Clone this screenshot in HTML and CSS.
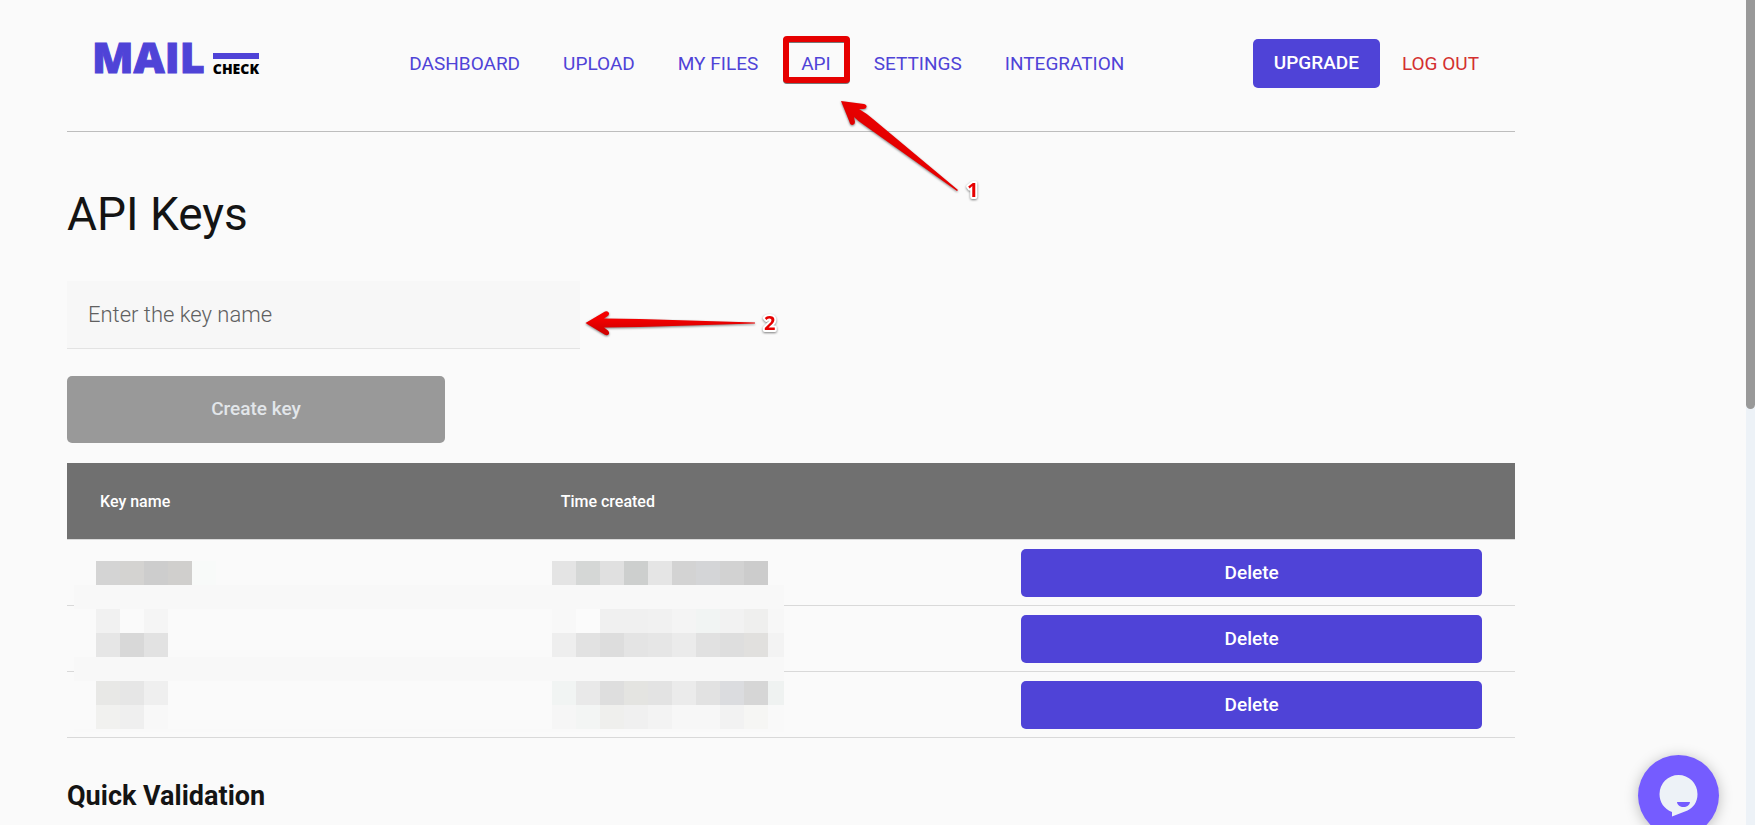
FILE: index.html
```html
<!DOCTYPE html>
<html lang="en">
<head>
<meta charset="utf-8">
<title>API Keys - Mail Check</title>
<meta name="viewport" content="width=device-width, initial-scale=1">
<link rel="stylesheet" href="styles.css">
</head>
<body>
<div class="page">
  <header class="header">
    <a class="logo" href="#" aria-label="Mail Check">
      <span class="logo-mail">MAIL</span>
      <span class="logo-side"><span class="logo-bar"></span><span class="logo-check">CHECK</span></span>
    </a>
    <nav class="nav">
      <a href="#">DASHBOARD</a>
      <a href="#">UPLOAD</a>
      <a href="#">MY FILES</a>
      <span class="marked">
        <a href="#">API</a>
        <svg class="note note-api" width="110" height="172" viewBox="780 32 110 172" aria-hidden="true">
          <defs>
            <linearGradient id="red" x1="1" y1="0" x2="0" y2="1"><stop offset="0.3" stop-color="#f40000"/><stop offset="0.7" stop-color="#d80000"/></linearGradient>
          </defs>
          <rect x="786" y="40" width="61" height="41" rx="1" fill="none" stroke="#777" stroke-width="6" stroke-linejoin="round"/>
          <rect x="786" y="39" width="61" height="41" rx="1" fill="none" stroke="#e60000" stroke-width="6" stroke-linejoin="round"/>
          <path class="shade" d="M841 101 L864 104 Q867 105 866.500 107 Q866 109.500 862 109 L859 109 Q866 113 873 119 L958 190 L957 191 L864 125 Q858 121 854 117 L855 122 Q855 124.500 852.500 125 Q850 125 849.500 122 Z" fill="url(#red)"/>
          <text class="note-num" x="967" y="197">1</text>
        </svg>
      </span>
      <a href="#">SETTINGS</a>
      <a href="#">INTEGRATION</a>
    </nav>
    <div class="account">
      <button class="btn upgrade" type="button">UPGRADE</button>
      <a class="logout" href="#">LOG OUT</a>
    </div>
  </header>

  <main>
    <h1>API Keys</h1>
    <form class="key-form">
      <div class="field">
        <input type="text" placeholder="Enter the key name" aria-label="Key name">
        <svg class="note note-input" width="200" height="40" viewBox="580 303 200 40" aria-hidden="true">
          <defs>
            <linearGradient id="red2" x1="0" y1="0" x2="0" y2="1"><stop offset="0.3" stop-color="#f40000"/><stop offset="0.8" stop-color="#d40000"/></linearGradient>
          </defs>
          <path class="shade" d="M585.500 323 L605 311.500 Q608 310.500 609 313 Q609.500 315 607 316.500 L604 318.500 L640 319 L755 322.500 V323.500 L640 327 L604 327.500 L608 330.500 Q610 333 608.500 334.500 Q607 336 604.500 334.500 Z" fill="url(#red2)"/>
          <text class="note-num" x="764" y="330">2</text>
        </svg>
      </div>
      <button class="btn create" type="button" disabled>Create key</button>
    </form>

    <div class="keys">
      <table>
        <thead>
          <tr><th scope="col">Key name</th><th scope="col">Time created</th><th></th></tr>
        </thead>
        <tbody>
          <tr><td></td><td></td><td><button class="btn delete" type="button">Delete</button></td></tr>
          <tr><td></td><td></td><td><button class="btn delete" type="button">Delete</button></td></tr>
          <tr><td></td><td></td><td><button class="btn delete" type="button">Delete</button></td></tr>
        </tbody>
      </table>
      <svg class="mosaic" width="710" height="171" viewBox="74 561 710 171" shape-rendering="crispEdges" aria-hidden="true">
        <path fill="#fafafa" d="M74 561h710v171H74z"/>
        <path fill="#f8f8f8" d="M74 585h710v24H74zM74 657h710v24H74z"/>
        <path fill="#f9f9f9" d="M74 729h710v3H74z"/>
        <g id="mosaic-cells"></g>
      </svg>
    </div>

    <h2>Quick Validation</h2>
  </main>
</div>

<button class="chat" type="button" aria-label="Open chat">
  <svg width="81" height="81" viewBox="0 0 81 81" aria-hidden="true">
    <path fill="#edf2f7" d="M40.500 20a19 19 0 0 1 19 19c0 8-4 13.500-10 16.500L34 61.500V57C26 54 21.500 47 21.500 39a19 19 0 0 1 19-19z"/>
    <path fill="#755cff" d="M39 47h13c-.5 3.500-3 5-6.500 5S39.500 50.500 39 47z"/>
  </svg>
</button>
<div class="scrollbar" aria-hidden="true"><div class="thumb"></div></div>
<script src="mosaic.js"></script>
</body>
</html>
```

FILE: styles.css
```css
* { box-sizing: border-box; }
body {
  margin: 0;
  min-height: 100vh;
  overflow: hidden;
  background: #fafafa;
  color: #141414;
  font-family: Roboto, "Liberation Sans", sans-serif;
  font-size: 19px;
}
a { color: #4f43d7; text-decoration: none; }
.page { max-width: 1515px; padding-left: 67px; }

.header {
  display: flex;
  justify-content: space-between;
  align-items: center;
  height: 132px;
  padding: 0 36px 4px 25px;
  border-bottom: 1px solid #bdbdbd;
}
.logo {
  display: flex;
  gap: 8px;
  padding: 0 22px 14px 0;
  font-family: "Open Sans", sans-serif;
  font-weight: 800;
}
.logo-mail { font-size: 43px; line-height: 44px; -webkit-text-stroke: 1px #4f43d7; }
.logo-side { display: flex; flex-direction: column; padding-top: 18px; }
.logo-bar { height: 6px; background: #4f43d7; }
.logo-check { margin-top: 1px; color: #000; font-size: 14px; line-height: 18px; }
.nav { display: flex; gap: 43px; line-height: 24px; }
.marked { position: relative; }
.account { display: flex; align-items: center; gap: 22px; }
.logout { color: #d32f2f; }

.btn {
  border: 0;
  border-radius: 5px;
  background: #4f43d7;
  color: #fff;
  font: 500 19px/24px Roboto, "Liberation Sans", sans-serif;
}
.upgrade { padding: 12px 21px 13px; }

.note { position: absolute; overflow: visible; pointer-events: none; }
.note-api { left: -21px; top: -20px; }
.note-input { left: 100%; top: 22px; }
.shade { filter: drop-shadow(0 1px 1px rgba(0, 0, 0, 0.5)); }
.note-num {
  fill: #e60000;
  stroke: #fff;
  stroke-width: 4px;
  stroke-linejoin: round;
  paint-order: stroke;
  font: 700 20px "Open Sans", sans-serif;
  filter: drop-shadow(0 1px 1px rgba(0, 0, 0, 0.5));
}

h1 { margin: 55px 0 39px; font-weight: 400; font-size: 46px; line-height: 55px; }
.key-form { margin-bottom: 20px; }
.field { position: relative; max-width: 513px; margin-bottom: 27px; }
.field input {
  display: block;
  width: 100%;
  height: 68px;
  padding: 0 21px;
  border: 0;
  border-bottom: 1px solid #e3e3e3;
  border-radius: 0;
  background: #f7f7f7;
  font: 300 22px Roboto, "Liberation Sans", sans-serif;
}
.field input::placeholder { color: #606060; opacity: 1; }
.create {
  display: block;
  width: 100%;
  max-width: 378px;
  height: 67px;
  padding: 0 0 2px;
  background: #999;
  color: #e2e6ea;
}

.keys { position: relative; }
table, thead, tbody { display: block; }
tr {
  display: grid;
  grid-template-columns: repeat(3, 1fr);
  align-items: center;
  padding: 9px 33px 8px;
  border-bottom: 1px solid #d9d9d9;
}
thead tr { height: 77px; background: #707070; }
th { padding: 0; text-align: left; color: #fff; font-weight: 500; font-size: 16px; }
td { padding: 0; }
.delete { display: block; width: 100%; height: 48px; }
.mosaic { position: absolute; left: 7px; top: 98px; }

h2 { margin: 41px 0 0; font-weight: 700; font-size: 27px; line-height: 34px; }

.chat {
  position: fixed;
  right: 36px;
  bottom: -11px;
  width: 81px;
  height: 81px;
  padding: 0;
  border: 0;
  border-radius: 50%;
  background: #755cff;
  box-shadow: 0 2px 14px rgba(0, 0, 0, 0.25);
}
.chat svg { display: block; }
.scrollbar { position: fixed; top: 0; right: 0; bottom: 0; width: 9px; background: #edf2f7; }
.thumb { height: 49.6%; background: #999; border-radius: 0 0 5px 5px; }
```

FILE: mosaic.js
```js
// Blurred-out cells: [x, y, colours of consecutive 24px squares]
const runs = [
  [96, 561, "d4d4d4 d4d3d1 cdcdcd d0cfcd f8faf9"],
  [96, 609, "f1f1f1 fafafa f5f5f5"],
  [96, 633, "e6e6e6 d8d8d8 e2e2e2"],
  [96, 681, "e8e8e6 e6e6e6 efefef"],
  [96, 705, "f1f1ef efefef f8f8f8"],
  [552, 561, "e4e4e4 d5d7d6 e0e0e0 cdcfce e5e5e5 d3d3d3 d4d5d7 d2d2d2 cccccc"],
  [552, 609, "f8f8f8 fbfbfb f0f0f0 f0f0f0 f1f1f1 f4f4f4 f1f4f3 f2f2f2 efefee f7f7f7"],
  [552, 633, "eeeeee e2e2e2 dddddd e4e4e4 e6e6e6 ebebeb e1e1e1 dedede e1e0de f3f3f3"],
  [552, 681, "f1f4f3 e9e9e9 dedede e4e4e1 e3e3e3 ebebeb e2e2e2 dbdcdf d6d6d6 eff2f1"],
  [552, 705, "f6f6f6 f3f5f4 efefed f0f0f0 f3f3f3 f7f7f7 f7f7f7 f2f2f2 f6f6f4 f9f9f9"]
];
const cells = document.getElementById("mosaic-cells");
for (const [x, y, colours] of runs) {
  colours.split(" ").forEach((colour, i) => {
    const cell = document.createElementNS("http://www.w3.org/2000/svg", "rect");
    cell.setAttribute("x", x + i * 24);
    cell.setAttribute("y", y);
    cell.setAttribute("width", 24);
    cell.setAttribute("height", 24);
    cell.setAttribute("fill", "#" + colour);
    cells.append(cell);
  });
}
```
